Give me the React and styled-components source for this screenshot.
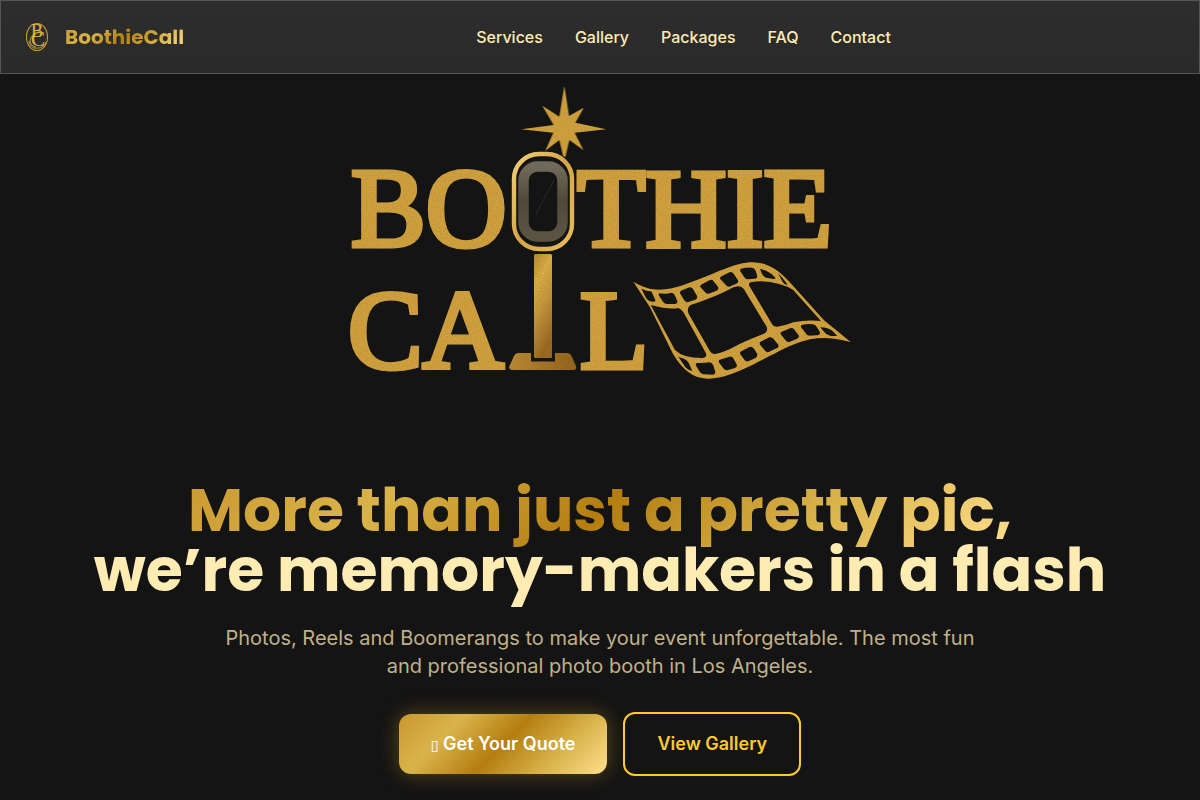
import React from "react";
import styled, { createGlobalStyle } from "styled-components";

const gold =
  "linear-gradient(135deg, #c9982f 0%, #d9b44a 25%, #b47d10 50%, #d9b44a 75%, #ffdf8e 100%)";

const GlobalStyle = createGlobalStyle`
  *, *::before, *::after { box-sizing: border-box; }
  body {
    margin: 0;
    background: #141414;
    color: #ffecb3;
    font-family: Inter, "Liberation Sans", sans-serif;
  }
`;

const Header = styled.header`
  display: flex;
  align-items: center;
  justify-content: space-between;
  min-height: 74px;
  padding: 12px 24px;
  border: 1px solid #555;
  background: linear-gradient(#2d2d2d, #2a2a2a);
`;

const Brand = styled.a`
  display: flex;
  align-items: center;
  gap: 16px;
  padding-right: 8px;
  text-decoration: none;
`;

const BrandName = styled.span`
  font: 700 20px/28px Poppins, Inter, sans-serif;
  color: transparent;
  background: ${gold};
  background-clip: text;
`;

const Nav = styled.nav`
  display: flex;
  flex-wrap: wrap;
  gap: 8px 32px;
`;

const NavLink = styled.a`
  font-size: 16px;
  line-height: 24px;
  font-weight: 500;
  color: #ffecb3;
  text-decoration: none;
`;

const HeaderEnd = styled.div`
  flex: none;
`;

const Hero = styled.main`
  display: flex;
  flex-direction: column;
  align-items: center;
  padding: 0 24px 24px;
  text-align: center;
`;

const HeroLogo = styled.svg`
  display: block;
  width: 100%;
  max-width: 600px;
  height: auto;
  margin-bottom: 30px;
`;

const Lettering = styled.text`
  font-family: "Liberation Serif", serif;
  font-size: 112px;
  stroke: #d2a23c;
  stroke-width: 5px;
`;

const Monogram = styled.text`
  font-family: "Liberation Serif", serif;
  font-size: ${(p) => p.$size}px;
`;

const Title = styled.h1`
  margin: 0 0 24px;
  font: 700 60px/60px Poppins, Inter, sans-serif;
`;

const TitleAccent = styled.span`
  color: transparent;
  background: ${gold};
  background-clip: text;
`;

const Lead = styled.p`
  max-width: 768px;
  margin: 0 0 32px;
  font-size: 20px;
  line-height: 28px;
  color: #c0b188;
`;

const Actions = styled.div`
  display: flex;
  flex-wrap: wrap;
  align-items: center;
  justify-content: center;
  gap: 16px;
`;

const Button = styled.button`
  padding: 16px 32px;
  border: ${(p) => (p.$outline ? "2px solid #ffca2c" : "0")};
  border-radius: 12px;
  background: ${(p) => (p.$outline ? "transparent" : gold)};
  box-shadow: ${(p) => (p.$outline ? "none" : "0 0 20px rgba(255, 202, 44, 0.3)")};
  color: ${(p) => (p.$outline ? "#ffca2c" : "#fff")};
  font: 600 18px/28px Inter, sans-serif;
  cursor: pointer;
`;

const ButtonGlyph = styled.span`
  font: 400 14px/14px "DejaVu Sans", sans-serif;
`;

const links = ["Services", "Gallery", "Packages", "FAQ", "Contact"];

const frames = [
  "M92,165 Q150,180 175,174 Q187,178 195,195 L258,310 Q262,322 248,324 Q190,325 165,300 Z",
  "M212,165 Q290,140 340,112 Q362,103 372,118 L440,230 Q446,246 430,252 Q370,275 330,297 Q300,310 285,312 Q276,314 270,304 L205,190 Q200,172 212,165 Z",
  "M392,97 Q430,88 480,103 Q500,108 520,120 L603,213 Q560,208 520,217 Q490,228 472,230 Q462,232 456,222 L388,108 Q384,100 392,97 Z",
];

const perforations = [
  "M64,116 Q80,124 94,124 L106,150 Q108,156 98,155 L88,153 Q80,150 76,140 Z",
  "M118,130 Q140,133 154,128 Q160,128 164,135 L172,152 Q174,161 164,162 L140,162 Q132,162 128,154 L117,137 Q114,131 118,130 Z",
  "M183,122 L208,112 Q215,110 219,117 L231,137 Q234,145 226,149 L205,156 Q197,158 192,150 L180,130 Q179,124 183,122 Z",
  "M243,104 L268,91 Q276,87 281,94 L295,112 Q297,119 290,122 L266,131 Q259,133 255,126 L240,110 Z",
  "M302,80 L328,67 Q336,64 341,71 L354,91 Q357,98 349,101 L328,110 Q321,111 317,104 L300,86 Z",
  "M362,56 Q380,52 396,53 Q404,55 407,62 L412,78 Q412,86 404,86 L384,88 Q376,88 372,80 L360,62 Z",
  "M420,56 Q440,60 455,72 L467,84 Q466,88 456,86 L438,83 Q430,80 426,72 Z",
  "M474,70 Q482,76 502,103 L500,105 Q492,102 488,96 Z",
  "M175,320 Q182,323 192,326 Q202,330 206,338 L217,362 Q206,362 195,350 Z",
  "M229,339 Q250,340 268,337 Q276,337 280,346 L286,366 Q286,374 277,374 L250,373 Q242,371 238,364 L227,345 Z",
  "M297,330 L328,320 Q336,318 341,326 L350,343 Q353,351 345,354 L322,361 Q314,362 310,355 L296,336 Z",
  "M361,305 L388,291 Q396,288 401,295 L412,312 Q414,320 407,324 L385,334 Q377,336 373,329 L360,311 Z",
  "M420,276 L448,262 Q456,260 461,267 L475,284 Q478,291 470,295 L446,306 Q438,308 434,301 L419,283 Z",
  "M482,247 L510,235 Q520,232 524,240 L537,257 Q538,264 530,267 L508,276 Q500,277 496,270 L482,253 Z",
  "M543,226 Q562,220 580,223 Q588,226 592,233 L600,247 Q601,255 592,256 L568,257 Q560,256 556,248 L543,232 Z",
  "M601,232 Q625,233 638,243 L652,258 L632,258 Q618,254 612,245 Z",
];

const filmOutline =
  "M40,95 C90,125 130,125 190,105 C270,80 330,42 390,37 C440,34 480,62 512,100 L612,211 L692,276 C620,258 580,262 530,280 C440,315 350,385 265,386 C215,386 185,355 158,310 L90,172 Z";

function BrandMark() {
  return (
    <svg width="24" height="32" viewBox="0 0 24 32" aria-hidden="true">
      <g fill="none" stroke="#c9982f">
        <ellipse cx="12" cy="16" rx="10.5" ry="13.5" strokeWidth="1.1" />
        <path d="M4 20C5 26 9 28 13 27C17 27 20 24 21 21" stroke="#e0b955" strokeWidth="0.8" />
        <path d="M9 14C3 17 4 25 11 26" strokeWidth="1" />
      </g>
      <g fill="#ddb14c" stroke="#ddb14c" strokeWidth="0.2">
        <Monogram $size={18} x="6" y="16">B</Monogram>
        <Monogram $size={21} x="6" y="25">C</Monogram>
      </g>
    </svg>
  );
}

function BoothLogo() {
  return (
    <HeroLogo viewBox="300 74 600 376" role="img" aria-label="Boothie Call">
      <defs>
        <filter id="grain" x="0" y="0" width="1" height="1">
          <feTurbulence type="fractalNoise" baseFrequency="0.8" numOctaves="2" result="n" />
          <feColorMatrix
            in="n"
            type="matrix"
            values="0 0 0 0 0.35  0 0 0 0 0.22  0 0 0 0 0.05  1.2 0 0 0 -0.45"
          />
          <feComposite in2="SourceGraphic" operator="in" result="g" />
          <feMerge>
            <feMergeNode in="SourceGraphic" />
            <feMergeNode in="g" />
          </feMerge>
        </filter>
        <linearGradient id="ring" x1="0" y1="0" x2="1" y2="1">
          <stop offset="0" stopColor="#f0cf76" />
          <stop offset="0.5" stopColor="#d5a548" />
          <stop offset="1" stopColor="#e8bd5c" />
        </linearGradient>
        <linearGradient id="lens" x1="0" y1="0" x2="0" y2="1">
          <stop offset="0" stopColor="#71695a" />
          <stop offset="0.5" stopColor="#50493b" />
          <stop offset="1" stopColor="#5c5443" />
        </linearGradient>
        <linearGradient id="pole" x1="0" y1="0" x2="0.3" y2="1">
          <stop offset="0" stopColor="#b8862f" />
          <stop offset="0.3" stopColor="#ddb046" />
          <stop offset="0.6" stopColor="#c4943a" />
          <stop offset="1" stopColor="#96641f" />
        </linearGradient>
        <linearGradient id="base" x1="0" y1="0" x2="1" y2="0">
          <stop offset="0" stopColor="#b98932" />
          <stop offset="0.6" stopColor="#a06c20" />
          <stop offset="1" stopColor="#8d5b19" />
        </linearGradient>
      </defs>
      <g fill="#d2a23c" filter="url(#grain)">
        <Lettering x="351" y="246">BO</Lettering>
        <Lettering x="577" y="246">THIE</Lettering>
        <Lettering x="348" y="368">CA</Lettering>
        <Lettering x="580" y="368">L</Lettering>
        <path
          transform="translate(500 80) scale(0.3333)"
          d="M193,18 L207,108 L251,83 L226,128 L318,148 L224,158 L250,210 L208,180 L196,230 L190,230 L178,180 L136,212 L160,158 L64,148 L161,135 L127,77 L178,110 Z"
        />
        <path
          transform="translate(620 250) scale(0.3333)"
          fillRule="evenodd"
          d={[filmOutline, ...frames, ...perforations].join(" ")}
        />
      </g>
      <rect x="511" y="151" width="64" height="101" rx="28" fill="#141414" />
      <g>
        <rect x="514" y="154" width="58" height="95" rx="25" fill="none" stroke="url(#ring)" strokeWidth="4.4" />
        <rect x="523.5" y="166.5" width="39" height="70" rx="14" fill="none" stroke="url(#lens)" strokeWidth="10.5" />
        <path d="M554 180L536 214" stroke="#3b3122" strokeWidth="0.7" />
      </g>
      <g filter="url(#grain)">
        <rect x="534" y="254" width="18" height="104" rx="1.5" fill="url(#pole)" />
        <path
          d="M518 353H531V361.5H555V353H567Q570 353 571.5 356L576 366Q577 370 573 370H512Q508 369 509.5 366L514 356Q515.5 353 518 353Z"
          fill="url(#base)"
        />
      </g>
    </HeroLogo>
  );
}

export default function App() {
  return (
    <>
      <GlobalStyle />
      <Header>
        <Brand href="#home">
          <BrandMark />
          <BrandName>BoothieCall</BrandName>
        </Brand>
        <Nav aria-label="Main">
          {links.map((label) => (
            <NavLink key={label} href={`#${label.toLowerCase()}`}>
              {label}
            </NavLink>
          ))}
        </Nav>
        <HeaderEnd />
      </Header>
      <Hero>
        <BoothLogo />
        <Title>
          <TitleAccent>More than just a pretty pic,</TitleAccent>
          <br />
          we’re memory-makers in a flash
        </Title>
        <Lead>
          Photos, Reels and Boomerangs to make your event unforgettable. The most fun and
          professional photo booth in Los Angeles.
        </Lead>
        <Actions>
          <Button type="button">
            <ButtonGlyph aria-hidden="true">▯</ButtonGlyph> Get Your Quote
          </Button>
          <Button type="button" $outline>View Gallery</Button>
        </Actions>
      </Hero>
    </>
  );
}
